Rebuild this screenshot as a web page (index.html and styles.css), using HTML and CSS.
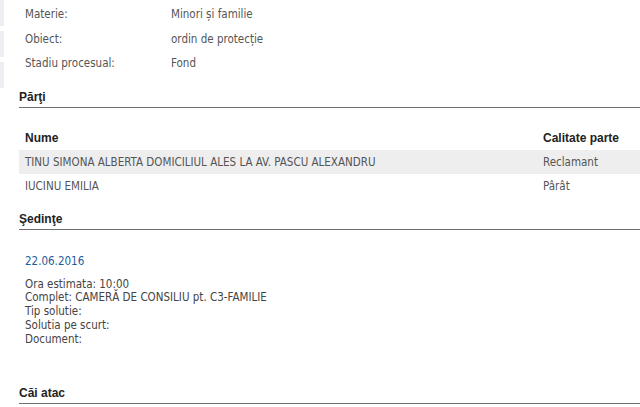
FILE: index.html
```html
<!DOCTYPE html>
<html lang="ro">
<head>
    <meta charset="UTF-8">
    <title>Dosar - detalii</title>
    <link rel="stylesheet" href="styles.css">
</head>
<body>

<div class="page">
    <div class="edge">
        <div class="edge-block"></div>
        <div class="edge-block"></div>
        <div class="edge-block"></div>
    </div>

    <div class="content">
        <table class="info">
            <tr><td class="label">Materie:</td><td>Minori și familie</td></tr>
            <tr><td class="label">Obiect:</td><td>ordin de protecție</td></tr>
            <tr><td class="label">Stadiu procesual:</td><td>Fond</td></tr>
        </table>

        <h3 class="section-title">Părţi</h3>
        <table class="parti">
            <tr>
                <th>Nume</th>
                <th class="col-calitate">Calitate parte</th>
            </tr>
            <tr class="alt">
                <td>TINU SIMONA ALBERTA DOMICILIUL ALES LA AV. PASCU ALEXANDRU</td>
                <td class="col-calitate">Reclamant</td>
            </tr>
            <tr>
                <td>IUCINU EMILIA</td>
                <td class="col-calitate">Pârât</td>
            </tr>
        </table>

        <h3 class="section-title">Şedinţe</h3>
        <div class="sedinta">
            <div class="sedinta-data">22.06.2016</div>
            <div class="sedinta-detalii">
                Ora estimata: 10:00<br>
                Complet: CAMERĂ DE CONSILIU pt. C3-FAMILIE<br>
                Tip solutie:<br>
                Solutia pe scurt:<br>
                Document:
            </div>
        </div>

        <h3 class="section-title">Căi atac</h3>
    </div>
</div>

</body>
</html>
```

FILE: styles.css
```css
body {
    margin: 0;
    font-family: "DejaVu Sans Condensed", "DejaVu Sans", Verdana, sans-serif;
    font-stretch: condensed;
    font-size: 11.5px;
    color: #555;
    background: #fff;
}
.page {
    display: flex;
}
.edge {
    width: 4px;
}
.edge-block {
    height: 26px;
    margin-bottom: 5px;
    background: #eceef2;
}
.content {
    flex: 1;
    margin-left: 15px;
}
.info {
    border-collapse: collapse;
    margin-top: 2px;
}
.info td {
    height: 24.5px;
    padding: 0 6px;
    vertical-align: middle;
}
.info td.label {
    width: 134px;
}
.section-title {
    font-family: "Liberation Sans", Arial, sans-serif;
    font-stretch: normal;
    font-size: 12px;
    font-weight: bold;
    color: #222;
    margin: 14px 0 0;
    line-height: 14px;
    padding-bottom: 3px;
    border-bottom: 1px solid #6f6f6f;
}
.parti {
    width: 100%;
    border-collapse: collapse;
    margin-top: 18px;
}
.parti th {
    font-family: "Liberation Sans", Arial, sans-serif;
    font-stretch: normal;
    font-size: 12px;
    font-weight: bold;
    color: #222;
    text-align: left;
    height: 24px;
    padding: 0 6px;
}
.parti td {
    height: 24px;
    padding: 0 6px;
}
.parti .col-calitate {
    width: 91px;
}
.parti tr.alt td {
    background: #eeeeee;
}
.sedinta {
    padding: 24px 6px 0;
    height: 118px;
}
.sedinta-data {
    color: #1e5c9c;
    font-size: 11.5px;
    line-height: 14px;
}
.sedinta-detalii {
    margin-top: 10px;
    line-height: 13.75px;
    color: #444;
}
```
